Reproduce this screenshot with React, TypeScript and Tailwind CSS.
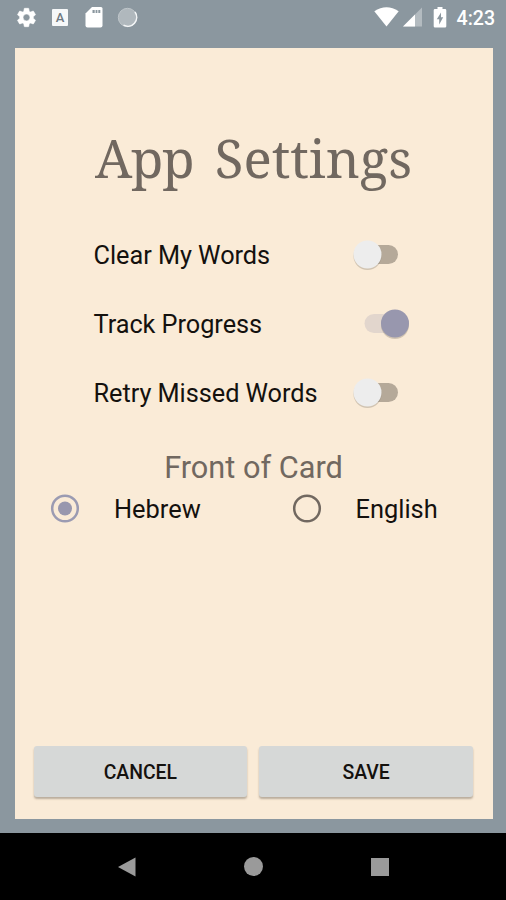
import React from "react";

function StatusBar() {
  return (
    <header className="flex h-12 shrink-0 items-start pt-[6px] pl-[14.5px] text-white">
      <svg className="h-[23px] w-[23px]" viewBox="0 0 24 24" fill="currentColor">
        <path d="M19.14 12.94c.04-.3.06-.61.06-.94 0-.32-.02-.64-.07-.94l2.03-1.58a.49.49 0 0 0 .12-.61l-1.92-3.32a.488.488 0 0 0-.59-.22l-2.39.96c-.5-.38-1.03-.7-1.62-.94l-.36-2.54a.484.484 0 0 0-.48-.41h-3.84c-.24 0-.43.17-.47.41l-.36 2.54c-.59.24-1.13.57-1.62.94l-2.39-.96c-.22-.08-.47 0-.59.22L2.74 8.87c-.12.21-.08.47.12.61l2.03 1.58c-.05.3-.09.63-.09.94s.02.64.07.94l-2.03 1.58a.49.49 0 0 0-.12.61l1.92 3.32c.12.22.37.29.59.22l2.39-.96c.5.38 1.03.7 1.62.94l.36 2.54c.05.24.24.41.48.41h3.84c.24 0 .44-.17.47-.41l.36-2.54c.59-.24 1.13-.56 1.62-.94l2.39.96c.22.08.47 0 .59-.22l1.92-3.32c.12-.22.07-.47-.12-.61l-2.01-1.58zM12 15.6A3.61 3.61 0 0 1 8.4 12c0-1.98 1.62-3.6 3.6-3.6s3.6 1.62 3.6 3.6-1.62 3.6-3.6 3.6z" stroke="currentColor" strokeWidth=".6" />
      </svg>
      <span className="mt-[3px] ml-[14.5px] flex h-[17px] w-4 items-center justify-center rounded-[1px] bg-[#f6f8f9] font-['Roboto',sans-serif] text-[13px] leading-none font-medium text-[#6f7a82]">A</span>
      <svg className="mt-[1px] ml-[16.5px] h-[21px] w-[18px]" viewBox="0 0 18 21" fill="currentColor">
        <path d="M7 0H16Q17.5 0 17.5 1.5V18.5Q17.5 20.5 15.5 20.5H2.5Q.5 20.5.5 18.5V6.5Z" />
        <path d="M7.5 3V6H9.7V3ZM10.6 3V6H12.4V3ZM13.3 3V6H15.3V3Z" fill="#8b979f" />
      </svg>
      <svg className="mt-[1px] ml-[14px] h-[21px] w-[21px]" viewBox="0 0 21 21">
        <circle cx="10.5" cy="10.5" r="9.2" fill="#b0b8bd" stroke="#bfc6ca" strokeWidth="1" />
        <path d="M18 5A9 9 0 0 1 6.5 18.2" fill="none" stroke="#f4f6f7" strokeWidth="1.5" />
      </svg>
      <svg className="mt-[1px] ml-[236.5px] h-5 w-[25px]" viewBox="0 0 25 20" fill="currentColor">
        <path d="M.3 4.2Q12.5-3.5 24.7 4.2L12.5 19.5Z" />
      </svg>
      <svg className="mt-[1px] ml-[3.5px] h-5 w-[20px]" viewBox="0 0 20 20" fill="currentColor">
        <path d="M0 19.5L19 .5V19.5Z" opacity=".35" />
        <path d="M0 19.5L12 7.5V19.5Z" />
      </svg>
      <svg className="mt-[1px] ml-[10.5px] h-[21px] w-[14px]" viewBox="0 0 14 21" fill="currentColor">
        <path fillRule="evenodd" d="M4.5 0H9.5V2H12Q13.3 2 13.3 3.3V19.2Q13.3 20.5 12 20.5H2Q.7 20.5.7 19.2V3.3Q.7 2 2 2H4.5ZM8 5.5L3.8 12.3H6.2V17.5L10.2 10.3H8Z" />
      </svg>
      <span className="mt-px ml-[9.5px] font-['Roboto',sans-serif] text-[19.6px] leading-[23px] font-medium whitespace-nowrap">4:23</span>
    </header>
  );
}

function Toggle({ on = false }: { on?: boolean }) {
  return (
    <svg className="h-9 w-[68px]" viewBox="0 0 68 36">
      <rect x={on ? 14.5 : 9.5} y="8" width="38.5" height="19" rx="9.5" fill={on ? "#e2d6cd" : "#b5a999"} />
      <circle cx={on ? 45 : 17.5} cy="19" r="14" fill="#75695c" opacity=".3" />
      <circle cx={on ? 45 : 17.5} cy="17.5" r="14" fill={on ? "#9897ae" : "#ededed"} />
    </svg>
  );
}

function SettingRow({ label, on }: { label: string; on?: boolean }) {
  return (
    <div className="flex h-[69.3px] items-center justify-between pr-[75px] pl-[79px]">
      <span className="pt-[2px] text-[25.3px] leading-9 tracking-[-0.04px] whitespace-nowrap">{label}</span>
      <Toggle on={on} />
    </div>
  );
}

function Radio({ label, checked = false }: { label: string; checked?: boolean }) {
  return (
    <div className="flex h-9 w-[241.5px] shrink-0 items-center">
      <svg className="h-[30px] w-[30px]" viewBox="0 0 30 30">
        <circle cx="15" cy="14.5" r="12.8" fill="none" stroke={checked ? "#9b9bb2" : "#716860"} strokeWidth="2.5" />
        {checked && <circle cx="15" cy="14.5" r="7" fill="#9897ae" />}
      </svg>
      <span className="ml-[34px] pt-px text-[25.4px] leading-9 whitespace-nowrap">{label}</span>
    </div>
  );
}

function Button({ children }: { children: string }) {
  return (
    <button className="flex h-[51px] flex-1 items-center justify-center rounded-[3px] bg-[#d6d8d7] pt-[2px] text-[19.4px] font-medium shadow-[0_2px_2px_rgba(70,60,50,0.35)]">
      {children}
    </button>
  );
}

export default function App() {
  return (
    <div className="flex h-[900px] w-[506px] flex-col overflow-hidden bg-[#8b979f] font-['Roboto',sans-serif] text-[#14110e]">
      <StatusBar />
      <main className="mr-[13.5px] ml-[14.5px] flex h-[771px] shrink-0 flex-col bg-[#faebd7]">
        <h1 className="mt-[74px] h-[72px] pl-[80.5px] font-['Noto_Serif','DejaVu_Serif',serif] text-[52.8px] leading-[72px] font-normal [word-spacing:7.5px] whitespace-nowrap text-[#716860]">
          <span className="tracking-[-1.2px]">App</span> Settings
        </h1>
        <div className="mt-[26px]">
          <SettingRow label="Clear My Words" />
          <SettingRow label="Track Progress" on />
          <SettingRow label="Retry Missed Words" />
        </div>
        <h2 className="mt-[19px] text-center text-[30.7px] leading-[42px] font-normal text-[#716860]">Front of Card</h2>
        <div className="mt-[2px] flex pl-[35.5px]">
          <Radio label="Hebrew" checked />
          <Radio label="English" />
        </div>
        <div className="mt-auto mb-[22px] flex gap-[12px] pr-[19.5px] pl-[19px]">
          <Button>CANCEL</Button>
          <Button>SAVE</Button>
        </div>
      </main>
      <nav className="mt-[14px] flex flex-1 items-center justify-between bg-black pr-[117px] pl-[118px]">
        <svg className="h-5 w-[18px]" viewBox="0 0 18 20" fill="#9a9a9a"><path d="M0 10L17.5.5V19.5Z" /></svg>
        <span className="h-[19px] w-[19px] rounded-full bg-[#9a9a9a]" />
        <span className="h-[18px] w-[18px] bg-[#9a9a9a]" />
      </nav>
    </div>
  );
}
